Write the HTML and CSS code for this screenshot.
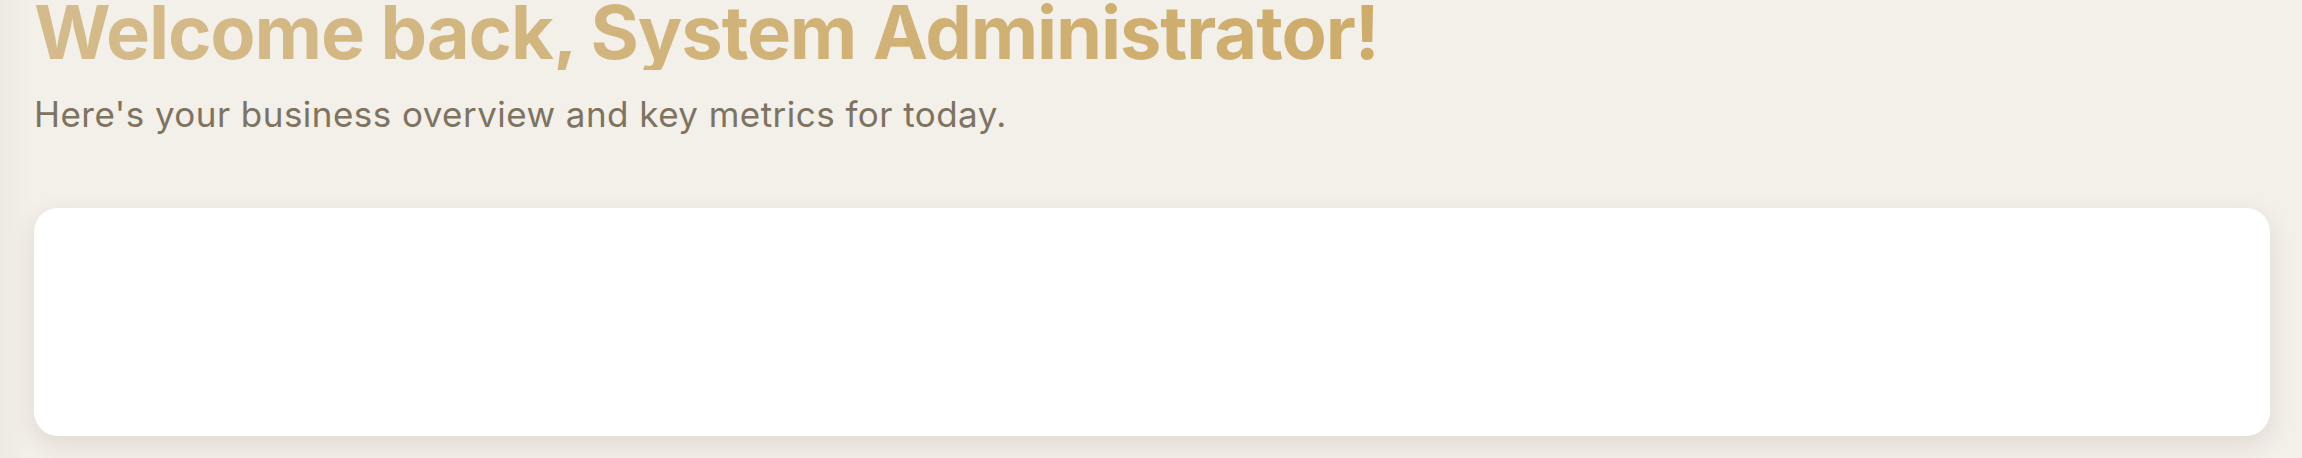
FILE: index.html
```html
<!DOCTYPE html>
<html lang="en">
<head>
<meta charset="utf-8">
<title>Dashboard</title>
<link rel="stylesheet" href="styles.css">
</head>
<body>
<main class="page">
  <header class="welcome">
    <h1 class="welcome-title">Welcome back, System Administrator!</h1>
    <p class="welcome-sub">Here's your business overview and key metrics for today.</p>
  </header>
  <section class="card"></section>
</main>
</body>
</html>
```

FILE: styles.css
```css
html, body {
  margin: 0;
  padding: 0;
  height: 100%;
  overflow: hidden;
}
body {
  background: #f3efe9;
  font-family: Inter, "Noto Sans", sans-serif;
}
.page {
  min-height: 100%;
  box-sizing: border-box;
  padding: 0 32px 0 34px;
  background: linear-gradient(90deg, #eeeae3 0, #f3efe9 30px);
}
.welcome {
  display: flex;
  flex-direction: column;
}
.welcome-title {
  margin: 0;
  font-size: 74px;
  line-height: 64px;
  font-weight: 700;
  letter-spacing: -0.015em;
  background: linear-gradient(90deg, #d4bb8b 0%, #ceac6a 100%);
  -webkit-background-clip: text;
  background-clip: text;
  color: transparent;
  align-self: flex-start;
  padding-bottom: 6px;
}
.welcome-sub {
  margin: 20px 0 0;
  font-size: 35px;
  line-height: 49px;
  letter-spacing: 0.013em;
  color: #7d7360;
}
.card {
  margin-top: 69px;
  height: 228px;
  background: #ffffff;
  border-radius: 24px;
  box-shadow: 0 8px 24px rgba(80, 60, 30, 0.12);
}
```
